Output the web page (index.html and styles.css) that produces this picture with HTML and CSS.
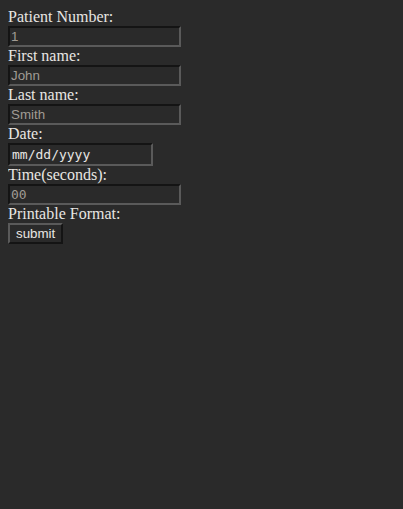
FILE: index.html
```html
<!DOCTYPE html>
<html>
<head>
<meta charset="utf-8">
<link rel="stylesheet" href="styles.css">
</head>
<body>
<form class="form">
Patient Number:<br>
<input class="field" type="text" placeholder="1"><br>
First name:<br>
<input class="field" type="text" placeholder="John"><br>
Last name:<br>
<input class="field" type="text" placeholder="Smith"><br>
Date:<br>
<input class="field date" type="text" placeholder="mm/dd/yyyy"><br>
Time(seconds):<br>
<input class="field mono" type="text" placeholder="00"><br>
Printable Format:<br>
<input class="btn" type="submit" value="submit">
</form>
</body>
</html>
```
FILE: styles.css
```css
html, body {
  background: #2a2a2a;
}
body {
  margin: 8px;
  color: #e8e6e3;
  font-family: "Liberation Serif", "Times New Roman", serif;
  font-size: 16px;
}
.form {
  margin: 0;
}
.field {
  box-sizing: border-box;
  width: 173px;
  height: 21px;
  background: #2a2a2a;
  color: #a09b94;
  font-family: "Liberation Sans", Arial, sans-serif;
  font-size: 13.333px;
  border-style: solid;
  border-width: 2px;
  border-color: #141414 #5a5a5a #5a5a5a #141414;
  padding: 1px 1px;
  margin: 0;
}
.field::placeholder {
  color: #a09b94;
  opacity: 1;
}
.mono {
  font-family: "DejaVu Sans Mono", monospace;
  font-size: 13px;
}
.date {
  width: 145px;
  height: 23px;
  padding: 1px 2px;
  font-family: "DejaVu Sans Mono", monospace;
  font-size: 13px;
}
.date::placeholder {
  color: #e8e6e3;
}
.btn {
  box-sizing: border-box;
  height: 21px;
  background: #2a2a2a;
  color: #e8e6e3;
  font-family: "Liberation Sans", Arial, sans-serif;
  font-size: 13.333px;
  border-style: solid;
  border-width: 2px;
  border-color: #5a5a5a #141414 #141414 #5a5a5a;
  padding: 1px 6px;
  margin: 0;
}
```
